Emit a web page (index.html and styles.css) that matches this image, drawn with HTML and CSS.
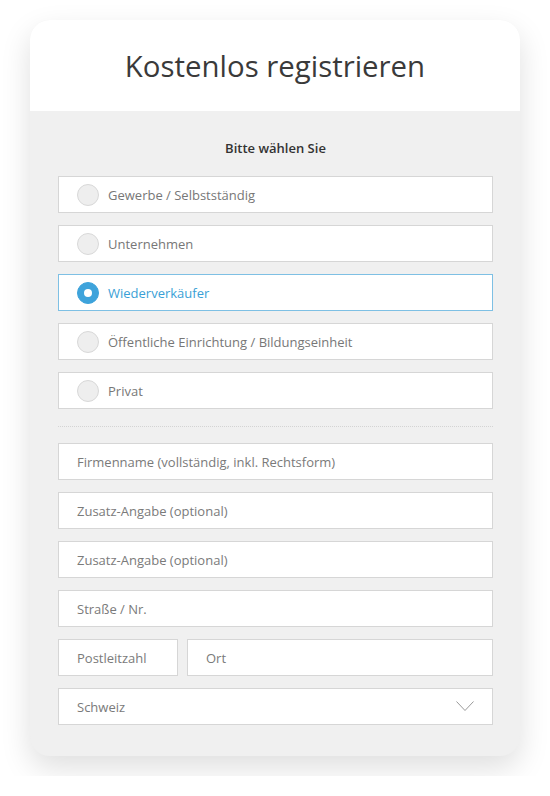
FILE: index.html
```
<!DOCTYPE html>
<html lang="de">
<head>
<meta charset="utf-8">
<link rel="stylesheet" href="styles.css">
</head>
<body>
<div class="card">
  <div class="card-head"><h1 class="title">Kostenlos registrieren</h1></div>
  <div class="card-body">
    <div class="label">Bitte wählen Sie</div>
    <div class="options">
      <div class="option"><span class="radio"></span><span>Gewerbe / Selbstständig</span></div>
      <div class="option"><span class="radio"></span><span>Unternehmen</span></div>
      <div class="option selected"><span class="radio"></span><span>Wiederverkäufer</span></div>
      <div class="option"><span class="radio"></span><span>Öffentliche Einrichtung / Bildungseinheit</span></div>
      <div class="option"><span class="radio"></span><span>Privat</span></div>
    </div>
    <div class="divider"></div>
    <div class="fields">
      <div class="field">Firmenname (vollständig, inkl. Rechtsform)</div>
      <div class="field">Zusatz-Angabe (optional)</div>
      <div class="field">Zusatz-Angabe (optional)</div>
      <div class="field">Straße / Nr.</div>
      <div class="row">
        <div class="field zip">Postleitzahl</div>
        <div class="field city">Ort</div>
      </div>
      <div class="field select"><span>Schweiz</span>
        <svg class="chev" width="18" height="11" viewBox="0 0 18 11"><path d="M0.5 0.5 L9 9.5 L17.5 0.5" fill="none" stroke="#999" stroke-width="1"/></svg>
      </div>
    </div>
  </div>
</div>
</body>
</html>
```
FILE: styles.css
```
html, body { margin: 0; padding: 0; background: #fff; }
body { font-family: "Open Sans", "Noto Sans", sans-serif; padding: 20px 30px; }
.card {
  width: 490px;
  border-radius: 20px;
  overflow: hidden;
  background: #f0f0f0;
  box-shadow: 0 12px 30px rgba(0,0,0,0.13);
}
.card-head { background: #fff; height: 91px; display: flex; align-items: center; justify-content: center; }
.title { margin: 0; font-weight: 400; font-size: 29.4px; color: #3a3a3a; padding-bottom: 0; }
.card-body { padding: 28px 27px 31px 28px; }
.label { text-align: center; font-size: 13px; font-weight: 600; color: #333; line-height: 18px; margin-bottom: 19px; }
.options { display: flex; flex-direction: column; gap: 12px; }
.option {
  height: 35px; border: 1px solid #d6d6d6; background: #fff;
  display: flex; align-items: center; padding-left: 18px; gap: 9px;
  font-size: 13px; color: #777;
}
.radio { width: 20px; height: 20px; border-radius: 50%; background: #eeeeee; border: 1px solid #d8d8d8; box-sizing: content-box; }
.option.selected { border-color: #7ec0e4; color: #3a9fd6; }
.option.selected .radio { background: #3ea3db; border-color: #3ea3db; position: relative; }
.option.selected .radio::after { content: ""; position: absolute; left: 6px; top: 6px; width: 8px; height: 8px; border-radius: 50%; background: #fff; }
.divider { border-top: 1px dotted #d4d4d4; margin: 17px 0 16px; }
.fields { display: flex; flex-direction: column; gap: 12px; }
.field {
  height: 35px; border: 1px solid #d6d6d6; background: #fff;
  display: flex; align-items: center; padding-left: 18px;
  font-size: 13px; color: #7a7a7a;
}
.row { display: flex; gap: 9px; }
.zip { width: 100px; flex: none; }
.city { flex: 1; }
.select { justify-content: space-between; padding-right: 18px; }
.chev { display: block; }
```
